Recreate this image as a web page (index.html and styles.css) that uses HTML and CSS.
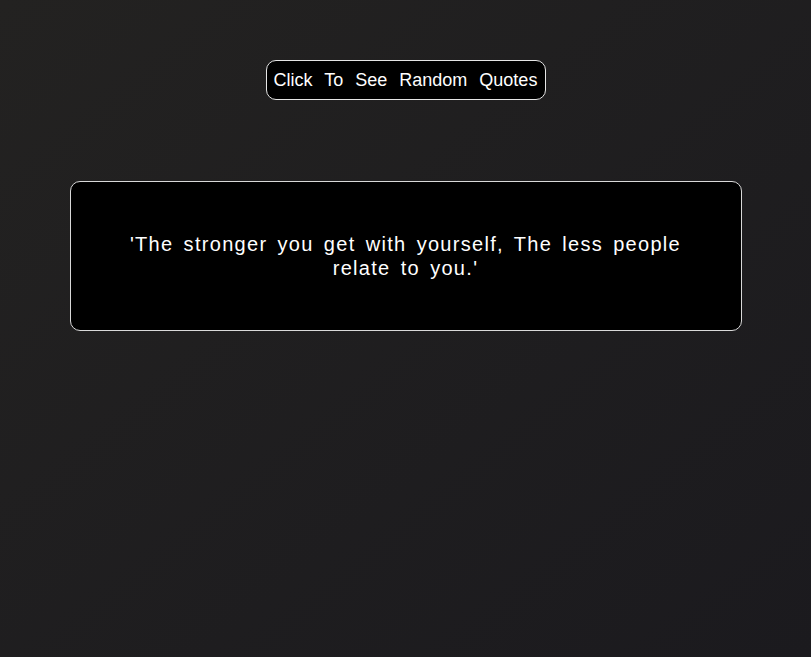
FILE: index.html
```html
<!DOCTYPE html>
<html>
<head>
<meta charset="utf-8">
<link rel="stylesheet" href="styles.css">
</head>
<body>
<main class="page">
  <button class="quote-btn">Click To See Random Quotes</button>
  <section class="quote-box">
    <p class="quote-text">'The stronger you get with yourself, The less people relate to you.'</p>
  </section>
</main>
</body>
</html>
```

FILE: styles.css
```css
html, body {
  margin: 0;
  padding: 0;
  height: 100%;
}
body {
  background: linear-gradient(to bottom right, #232221, #1b1a1e);
  font-family: "Liberation Sans", Arial, sans-serif;
  color: #fff;
}
.page {
  display: flex;
  flex-direction: column;
  align-items: center;
  padding-top: 60px;
}
.quote-btn {
  box-sizing: border-box;
  height: 40px;
  width: 280px;
  background: #000;
  color: #fff;
  border: 1px solid #e6e6e6;
  border-radius: 10px;
  font-family: "Liberation Sans", Arial, sans-serif;
  font-size: 18px;
  word-spacing: 7px;
  padding: 0;
  cursor: pointer;
}
.quote-box {
  box-sizing: border-box;
  margin-top: 81px;
  width: 672px;
  height: 150px;
  background: #000;
  border: 1px solid #d9d9d9;
  border-radius: 10px;
  display: flex;
  align-items: center;
  justify-content: center;
  padding: 0 58px;
}
.quote-text {
  margin: 0;
  text-align: center;
  font-size: 20px;
  line-height: 24px;
  letter-spacing: 1.3px;
  word-spacing: 3.3px;
}
```
